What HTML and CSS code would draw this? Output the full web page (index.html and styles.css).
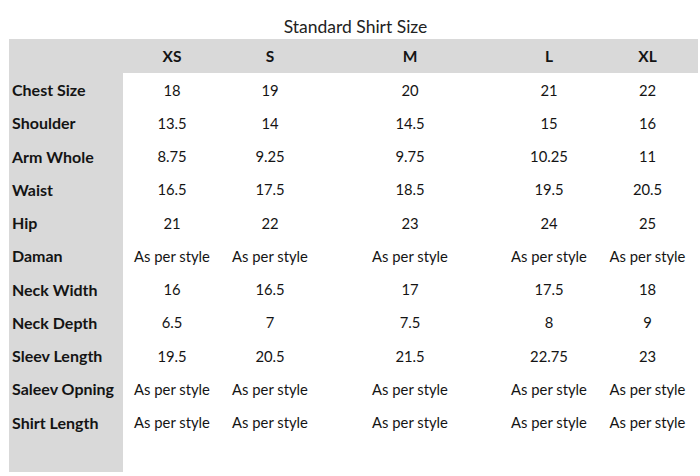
FILE: index.html
```html
<!DOCTYPE html>
<html>
<head>
<meta charset="utf-8">
<link rel="stylesheet" href="styles.css">
</head>
<body>
<div class="page">
  <div class="title">Standard Shirt Size</div>
  <div class="chart">
    <div class="cell head label"></div>
    <div class="cell head">XS</div>
    <div class="cell head">S</div>
    <div class="cell head">M</div>
    <div class="cell head">L</div>
    <div class="cell head">XL</div>

    <div class="cell label">Chest Size</div>
    <div class="cell">18</div><div class="cell">19</div><div class="cell">20</div><div class="cell">21</div><div class="cell">22</div>

    <div class="cell label">Shoulder</div>
    <div class="cell">13.5</div><div class="cell">14</div><div class="cell">14.5</div><div class="cell">15</div><div class="cell">16</div>

    <div class="cell label">Arm Whole</div>
    <div class="cell">8.75</div><div class="cell">9.25</div><div class="cell">9.75</div><div class="cell">10.25</div><div class="cell">11</div>

    <div class="cell label">Waist</div>
    <div class="cell">16.5</div><div class="cell">17.5</div><div class="cell">18.5</div><div class="cell">19.5</div><div class="cell">20.5</div>

    <div class="cell label">Hip</div>
    <div class="cell">21</div><div class="cell">22</div><div class="cell">23</div><div class="cell">24</div><div class="cell">25</div>

    <div class="cell label">Daman</div>
    <div class="cell">As per style</div><div class="cell">As per style</div><div class="cell">As per style</div><div class="cell">As per style</div><div class="cell">As per style</div>

    <div class="cell label">Neck Width</div>
    <div class="cell">16</div><div class="cell">16.5</div><div class="cell">17</div><div class="cell">17.5</div><div class="cell">18</div>

    <div class="cell label">Neck Depth</div>
    <div class="cell">6.5</div><div class="cell">7</div><div class="cell">7.5</div><div class="cell">8</div><div class="cell">9</div>

    <div class="cell label">Sleev Length</div>
    <div class="cell">19.5</div><div class="cell">20.5</div><div class="cell">21.5</div><div class="cell">22.75</div><div class="cell">23</div>

    <div class="cell label">Saleev Opning</div>
    <div class="cell">As per style</div><div class="cell">As per style</div><div class="cell">As per style</div><div class="cell">As per style</div><div class="cell">As per style</div>

    <div class="cell label">Shirt Length</div>
    <div class="cell">As per style</div><div class="cell">As per style</div><div class="cell">As per style</div><div class="cell">As per style</div><div class="cell">As per style</div>

    <div class="cell label"></div>
    <div class="cell"></div><div class="cell"></div><div class="cell"></div><div class="cell"></div><div class="cell"></div>
  </div>
</div>
</body>
</html>
```

FILE: styles.css
```css
html, body {
  margin: 0;
  padding: 0;
  background: #ffffff;
}

body {
  font-family: Lato, "Open Sans", "Liberation Sans", sans-serif;
  color: #141414;
  width: 700px;
  height: 476px;
  overflow: hidden;
}

.page {
  padding-left: 9px;
}

.title {
  height: 39px;
  display: flex;
  align-items: flex-end;
  justify-content: center;
  font-size: 17.5px;
  line-height: 21px;
  padding-left: 4px;
  padding-bottom: 2px;
  width: 689px;
  box-sizing: border-box;
  color: #222;
}

.chart {
  display: grid;
  grid-template-columns: 114px 98px 98px 182px 96px 101px;
  grid-template-rows: 34px;
  grid-auto-rows: 33.25px;
}

.cell {
  display: flex;
  align-items: center;
  justify-content: center;
  font-size: 14.8px;
  white-space: nowrap;
}

.head {
  background: #d9d9d9;
  font-weight: 700;
  font-size: 15.5px;
}

.label {
  background: #d9d9d9;
  justify-content: flex-start;
  padding-left: 3px;
  font-weight: 700;
  font-size: 16px;
}
```
